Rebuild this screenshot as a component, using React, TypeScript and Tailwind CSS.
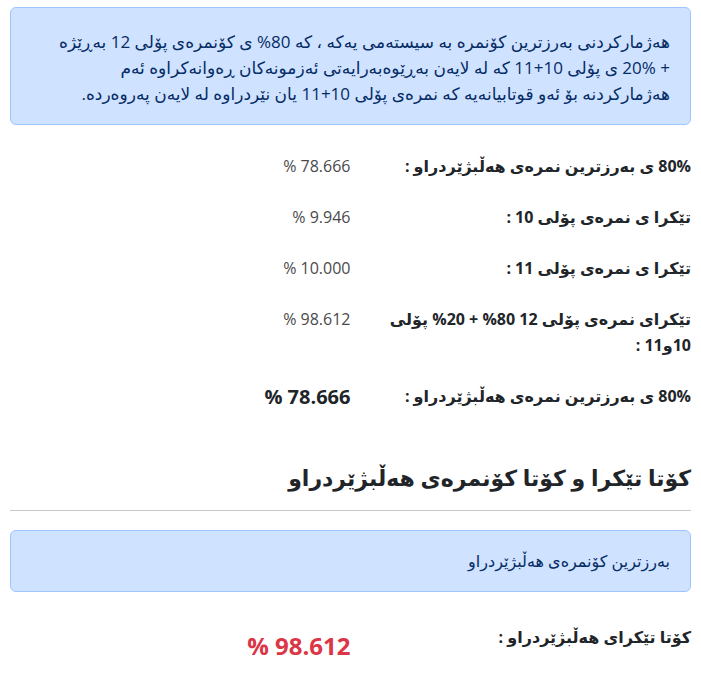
import React from 'react'

const rows = [
  { label: '80% ی بەرزترین نمرەی هەڵبژێردراو :', value: '78.666 %' },
  { label: 'تێکرا ی نمرەی پۆلی 10 :', value: '9.946 %' },
  { label: 'تێکرا ی نمرەی پۆلی 11 :', value: '10.000 %' },
  { label: 'تێکرای نمرەی پۆلی 12 80% + 20% پۆلی 10و11 :', value: '98.612 %' },
]

export default function App() {
  return (
    <div
      dir="rtl"
      className="min-h-screen bg-white px-[10px] pt-[7px] pb-10 text-[#212529] font-['Open_Sans','DejaVu_Sans',sans-serif]"
    >
      {/* Intro note */}
      <div className="rounded-md border border-[#9ec5fe] bg-[#cfe2ff] px-5 pt-[21px] pb-[17px] text-[17px] leading-[26px] text-[#052c65]">
        هەژمارکردنی بەرزترین کۆنمرە بە سیستەمی یەکە ، کە 80% ی کۆنمرەی پۆلی 12 بەڕێژە
        <br />+ 20% ی پۆلی 10+11 کە لە لایەن بەڕێوەبەرایەتی ئەزمونەکان ڕەوانەکراوە ئەم
        <br />
        هەژمارکردنە بۆ ئەو قوتابیانەیە کە نمرەی پۆلی 10+11 یان نێردراوە لە لایەن پەروەردە.
      </div>

      {/* Breakdown */}
      <div className="mt-[28px] grid grid-cols-2 gap-y-[25px] text-base leading-[26px]">
        {rows.map((r, i) => (
          <React.Fragment key={i}>
            <div className="font-bold">{r.label}</div>
            <div className="text-[#4a4a4a]">{r.value}</div>
          </React.Fragment>
        ))}
        <div className="font-bold">80% ی بەرزترین نمرەی هەڵبژێردراو :</div>
        <div className="text-xl font-bold">78.666 %</div>
      </div>

      {/* Final result */}
      <h3 className="mt-[48px] text-[22px] font-semibold leading-9">کۆتا تێکرا و کۆتا کۆنمرەی هەڵبژێردراو</h3>
      <hr className="mt-[15px] border-t border-[#c8c9ca]" />

      <div className="mt-[19px] rounded-md border border-[#9ec5fe] bg-[#cfe2ff] px-5 py-4 text-base leading-7 text-[#052c65]">
        بەرزترین کۆنمرەی هەڵبژێردراو
      </div>

      <div className="mt-[32px] grid grid-cols-2 items-start">
        <div className="text-base font-bold leading-[26px]">کۆتا تێکرای هەڵبژێردراو :</div>
        <div className="mt-1 text-2xl font-bold leading-9 text-[#dc3545]">98.612 %</div>
      </div>
    </div>
  )
}
